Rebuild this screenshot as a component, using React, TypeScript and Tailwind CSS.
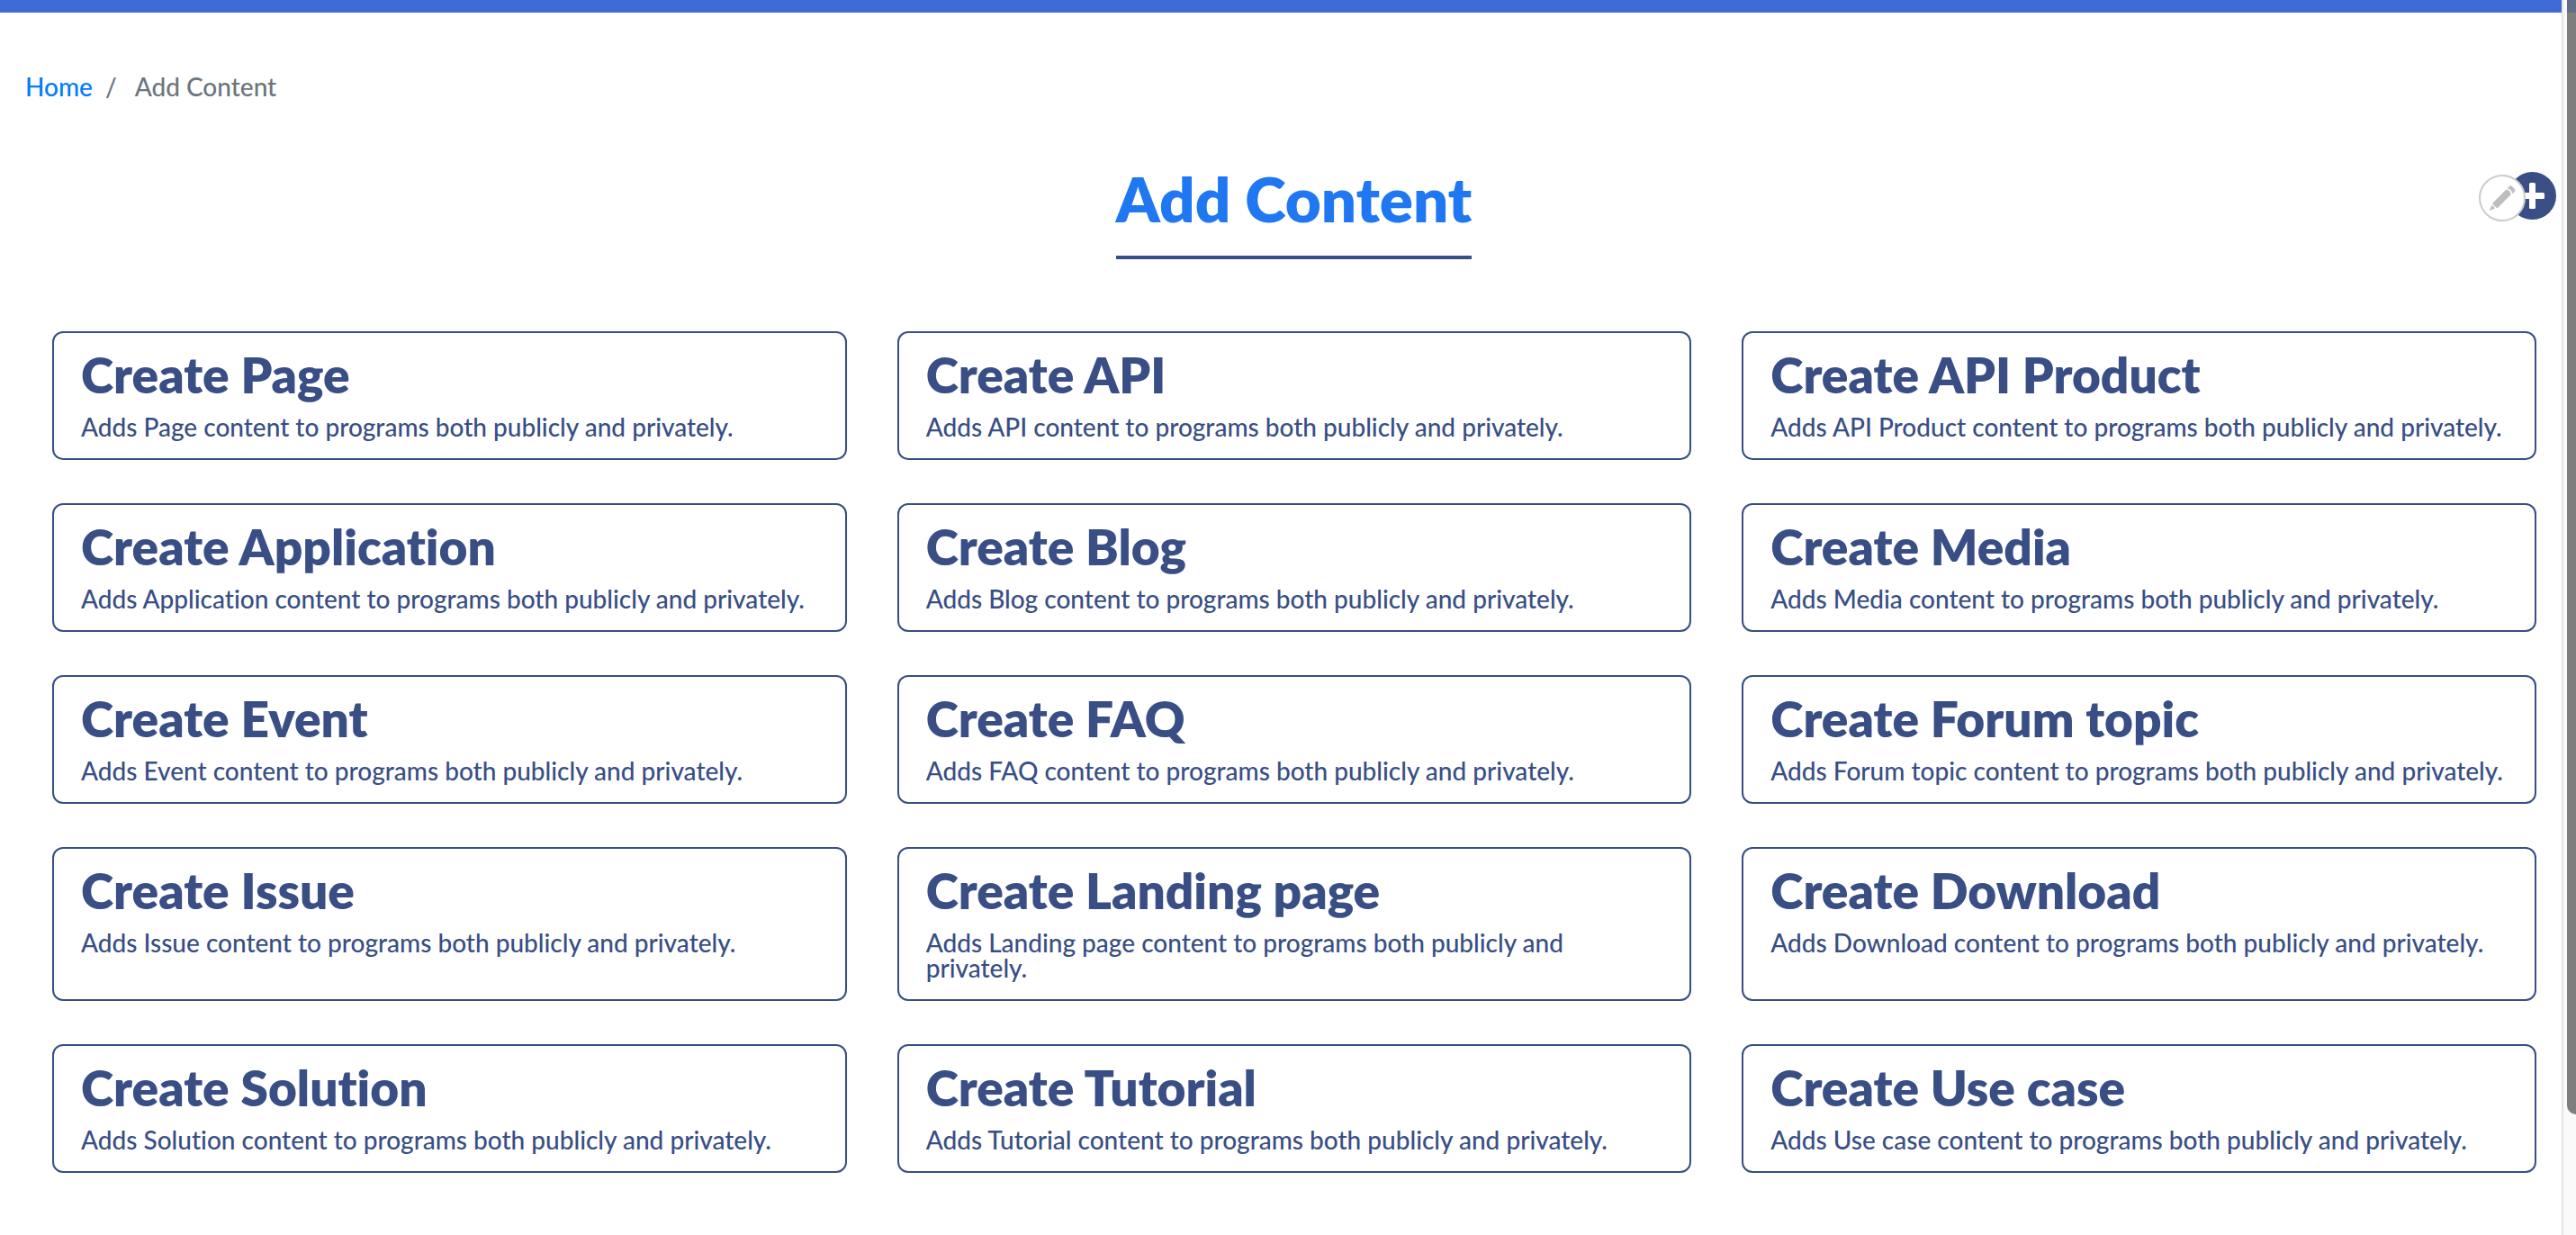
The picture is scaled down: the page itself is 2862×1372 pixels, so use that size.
const contentTypes = [
  'Page',
  'API',
  'API Product',
  'Application',
  'Blog',
  'Media',
  'Event',
  'FAQ',
  'Forum topic',
  'Issue',
  'Landing page',
  'Download',
  'Solution',
  'Tutorial',
  'Use case',
];

function Breadcrumb() {
  return (
    <nav aria-label="Breadcrumb" className="px-7 pt-[66px] text-[28px] leading-[32px]">
      <ol className="flex font-medium">
        <li>
          <a href="#home" className="text-[#007bff]">
            Home
          </a>
        </li>
        <li aria-hidden="true" className="pr-5 pl-3.5 text-[#6c757d]">
          /
        </li>
        <li aria-current="page" className="text-[#6c757d]">
          Add Content
        </li>
      </ol>
    </nav>
  );
}

function ContextActions() {
  return (
    <div className="absolute top-0 right-1.5 flex">
      <button
        type="button"
        aria-label="Edit"
        className="z-10 mt-[3px] -mr-[19px] size-[52px] rounded-full border-2 border-[#cccccc] bg-white"
      >
        <svg viewBox="0 0 48 48" className="size-12" fill="#bebebe" aria-hidden="true">
          <path d="M9.6 38.6 12.2 32.6Q15.3 32.7 15.6 35.6Z" />
          <path d="M12.8 30.2 28.4 14.6Q33 15.4 33.6 20.2L18.4 35.4Z" />
          <path d="M29.6 13.2 32 10.8Q33.4 9.6 35 11L38 14.2Q39 15.6 37.8 17L35.4 19.2Q34.4 14.4 29.6 13.2Z" />
        </svg>
      </button>
      <button type="button" aria-label="Add" className="size-[53px] rounded-full bg-[#384e85]">
        <svg viewBox="0 0 53 53" className="size-[53px]" fill="white" aria-hidden="true">
          <rect x="23" y="12" width="7" height="29" rx="1.5" />
          <rect x="12" y="23" width="28" height="7" rx="1.5" />
        </svg>
      </button>
    </div>
  );
}

function ContentCard({ type }: { type: string }) {
  return (
    <a
      href="#create"
      className="block rounded-xl border-2 border-[#384e85] px-[30px] pt-4 pb-[21px] text-[#384e85]"
    >
      <h2 className="mb-[14px] text-[55px] leading-[60px] font-extrabold">Create {type}</h2>
      <p className="text-[28px] leading-[28px] font-medium">
        Adds {type} content to programs both publicly and privately.
      </p>
    </a>
  );
}

export default function App() {
  return (
    <div className="flex min-h-screen bg-white font-['Lato',sans-serif] [font-variant-ligatures:none]">
      <div className="min-w-0 flex-1">
        <div className="h-[14px] bg-[#4069d8]" />
        <Breadcrumb />
        <header className="relative mt-[79px] flex justify-center pl-[29px]">
          <h1 className="border-b-4 border-[#384e85] pb-[33px] text-[69px] leading-[60px] font-extrabold text-[#1f77f2]">
            Add Content
          </h1>
          <ContextActions />
        </header>
        <main className="mt-20 grid grid-cols-3 gap-x-14 gap-y-12 pr-7 pb-12 pl-[58px]">
          {contentTypes.map((type) => (
            <ContentCard key={type} type={type} />
          ))}
        </main>
      </div>
      <div aria-hidden="true" className="w-4 border-l-2 border-[#e4e4e4] bg-[#fafafa]">
        <div className="ml-1 h-[90.2%] overflow-hidden rounded-bl-xl bg-[#7e7e7e]">
          <div className="h-[14px] bg-[#626d87]" />
        </div>
      </div>
    </div>
  );
}
